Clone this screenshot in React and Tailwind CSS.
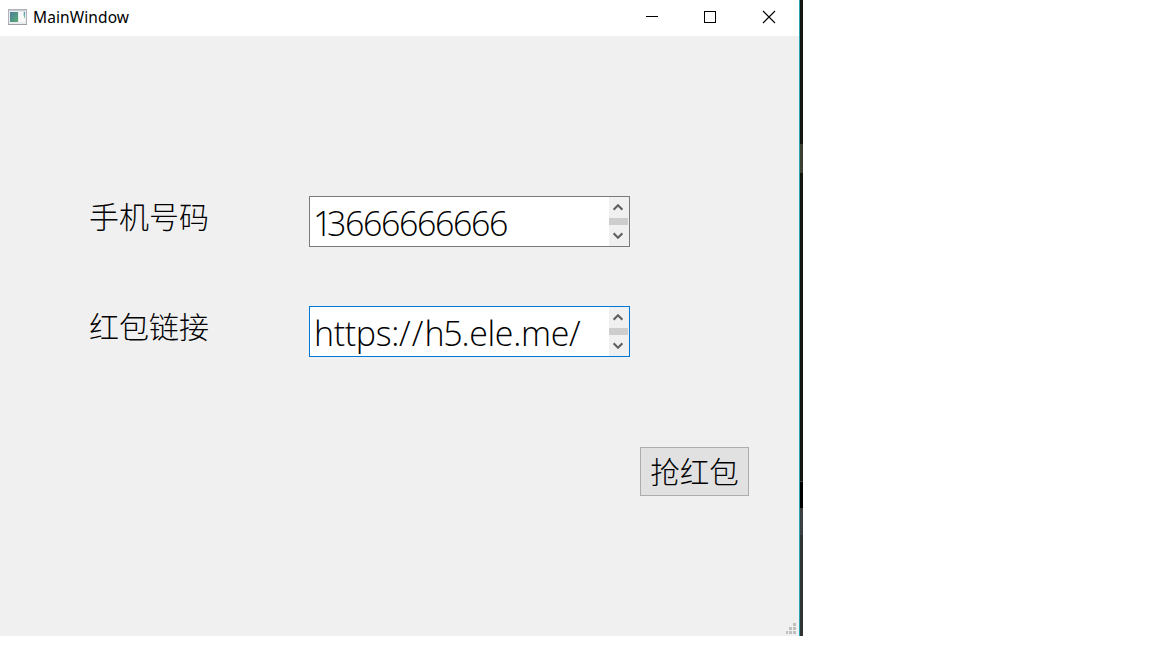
function AppIcon() {
  return (
    <svg width="19" height="16" viewBox="0 0 19 16" className="shrink-0" shapeRendering="crispEdges">
      <defs>
        <linearGradient id="pane" x1="0" y1="0" x2="1" y2="1">
          <stop offset="0" stopColor="#4b7f9c" />
          <stop offset="1" stopColor="#5bab72" />
        </linearGradient>
        <linearGradient id="side" x1="0" y1="0" x2="0" y2="1">
          <stop offset="0" stopColor="#4f8fb0" />
          <stop offset="1" stopColor="#8fd0a0" />
        </linearGradient>
      </defs>
      <rect width="19" height="16" fill="#b1b3ba" />
      <rect x="1" y="1" width="17" height="14" fill="#e9ebee" />
      <rect x="1" y="1" width="17" height="1" fill="#c8cad0" />
      <rect x="2" y="3" width="8" height="10" fill="url(#pane)" />
      <rect x="11" y="3" width="6" height="10" fill="#f7f8f8" />
      <rect x="15" y="3" width="1" height="4" fill="#c5dfdf" />
      <rect x="16" y="3" width="1" height="6" fill="url(#side)" />
      <rect y="15" width="19" height="1" fill="#9c9ea5" />
    </svg>
  );
}

function Arrow({ down }) {
  return (
    <svg width="10" height="7" viewBox="0 0 10 7" className={down ? "rotate-180" : ""}>
      <path d="M0.6 5.7 L5 1.3 L9.4 5.7" fill="none" stroke="#606060" strokeWidth="2.1" />
    </svg>
  );
}

function TextBox({ border, children }) {
  return (
    <div className={`flex h-[51px] w-[321px] border bg-white ${border}`}>
      <div className="flex-1 overflow-hidden whitespace-nowrap pl-1 pt-[3px] text-[34px] leading-[46px] font-light text-black">
        {children}
      </div>
      <div className="flex w-5 flex-col bg-[#f0f0f0]">
        <div className="flex h-[21px] items-center pl-1">
          <Arrow />
        </div>
        <div className="h-[7px] w-[19px] bg-[#cdcdcd]" />
        <div className="flex h-[21px] items-center pl-1">
          <Arrow down />
        </div>
      </div>
    </div>
  );
}

function Field({ label, border, children }) {
  return (
    <div className="flex h-[51px]">
      <div className="-mt-px w-[220px] text-[30px] leading-[44px] font-light text-black">{label}</div>
      <TextBox border={border}>{children}</TextBox>
    </div>
  );
}

export default function App() {
  return (
    <div className="flex h-[648px] w-[1152px] overflow-hidden bg-white font-['Open_Sans','Noto_Sans_CJK_SC',sans-serif]">
      <div className="flex h-[636px] w-[799px] flex-col bg-[#f0f0f0]">
        <header className="flex h-9 shrink-0 bg-white pt-[9px]">
          <div className="flex h-4 flex-1 items-center pl-2">
            <AppIcon />
            <span className="ml-1.5 font-['Noto_Sans',sans-serif] text-[15.5px] leading-4 tracking-[0.1px] text-black">MainWindow</span>
          </div>
          <svg width="153" height="16" viewBox="0 0 153 16" fill="none" stroke="#000">
            <path d="M0 7.5H12M58.5 2.5H69.5V13.5H58.5Z" shapeRendering="crispEdges" />
            <path d="M117 2L129 14M129 2L117 14" strokeWidth="1.1" />
          </svg>
        </header>
        <main className="flex flex-1 flex-col pl-[89px] pt-40">
          <Field label="手机号码" border="border-[#7a7a7a]">
            <span className="-ml-px tracking-[-1.42px]">
              <span className="tracking-[-5.4px]">1</span>3666666666
            </span>
          </Field>
          <div className="h-[59px]" />
          <Field label="红包链接" border="border-[#0078d7]">
            <span className="tracking-[-0.34px]">
              https:<span className="tracking-[1.2px]">//</span>
              <span className="tracking-[-1.3px]">h5</span>.ele.me/
            </span>
          </Field>
          <button className="ml-[551px] mt-[90px] h-[49px] w-[109px] border border-[#adadad] bg-[#e1e1e1] text-[29.5px] leading-[47px] font-light text-black">
            抢红包
          </button>
          <div className="mt-auto flex justify-end pb-0.5 pr-[3px]">
            <svg width="10" height="11" viewBox="0 0 10 11" fill="#bfbfbf" shapeRendering="crispEdges">
              <path d="M7 0h3v3h-3zM3 4h3v3h-3zM7 4h3v3h-3zM0 8h2v3h-2zM3 8h3v3h-3zM7 8h3v3h-3z" />
            </svg>
          </div>
        </main>
      </div>
      <div className="h-[636px] w-px bg-[#25a5b0]" />
      <div className="flex h-[636px] w-[3px] flex-col bg-[#303435]">
        <div className="h-36 bg-[#14150f]" />
        <div className="h-[29px] bg-[#3e3e33]" />
        <div className="h-[308px] bg-[#14150f]" />
        <div className="h-px bg-[#404040]" />
        <div className="h-[26px] bg-black" />
        <div className="h-[27px] bg-[#3c4042]" />
      </div>
    </div>
  );
}
